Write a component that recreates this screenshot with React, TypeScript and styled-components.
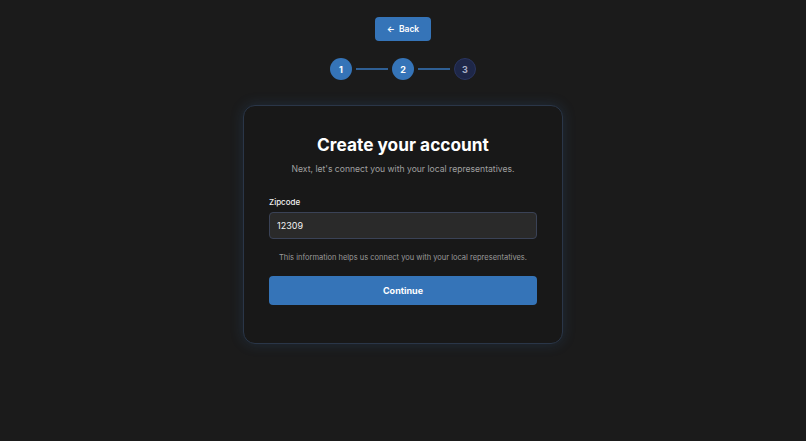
import React, { useState } from "react";
import styled, { createGlobalStyle } from "styled-components";

const Global = createGlobalStyle`
  html, body { margin: 0; padding: 0; background: #1b1b1b; }
  body { font-family: Inter, "Noto Sans", sans-serif; color: #fff; }
  * { box-sizing: border-box; }
`;

const Page = styled.div`
  min-height: 441px;
  display: flex;
  flex-direction: column;
  align-items: center;
  padding-top: 17px;
`;

const BackButton = styled.button`
  height: 24px;
  width: 56px;
  border: none;
  border-radius: 4px;
  background: #3574b8;
  color: #fff;
  font-family: Inter, sans-serif;
  font-size: 8.5px;
  font-weight: 600;
  display: flex;
  align-items: center;
  justify-content: center;
  gap: 4px;
  padding: 0;
  cursor: pointer;
`;

const Stepper = styled.div`
  display: flex;
  align-items: center;
  gap: 4px;
  margin-top: 17px;
`;

const StepCircle = styled.div<{ $active: boolean }>`
  width: 22px;
  height: 22px;
  border-radius: 50%;
  display: flex;
  align-items: center;
  justify-content: center;
  font-size: 9px;
  font-weight: 700;
  background: ${(p) => (p.$active ? "#3574b8" : "#1e2748")};
  color: ${(p) => (p.$active ? "#fff" : "#a9b0c6")};
  border: ${(p) => (p.$active ? "none" : "1px solid #2a3560")};
`;

const StepLine = styled.div`
  width: 32px;
  height: 2px;
  background: #2f5f94;
`;

const Card = styled.div`
  margin-top: 25px;
  width: 320px;
  height: 239px;
  background: #181818;
  border: 1px solid #2a3648;
  border-radius: 12px;
  box-shadow: 0 0 14px rgba(53, 116, 184, 0.2);
  padding: 27px 25px 0;
  display: flex;
  flex-direction: column;
`;

const Title = styled.h1`
  margin: 0;
  text-align: center;
  font-size: 17.3px;
  font-weight: 700;
  line-height: 24px;
  color: #fff;
`;

const Subtitle = styled.p`
  margin: 6px 0 0;
  text-align: center;
  font-size: 8.6px;
  line-height: 12px;
  color: #a0a0a0;
`;

const Label = styled.label`
  margin-top: 22px;
  font-size: 8px;
  font-weight: 500;
  color: #f0f0f0;
  line-height: 11px;
`;

const Input = styled.input`
  margin-top: 4px;
  height: 27px;
  width: 100%;
  background: #2a2a2a;
  border: 1px solid #3a4256;
  border-radius: 4px;
  color: #f2f2f2;
  font-family: Inter, sans-serif;
  font-size: 9px;
  padding: 0 7px;
  outline: none;
`;

const Helper = styled.p`
  margin: 14px 0 0;
  text-align: center;
  font-size: 7.5px;
  line-height: 10px;
  color: #9a9a9a;
`;

const ContinueButton = styled.button`
  margin-top: 13px;
  height: 29px;
  width: 100%;
  border: none;
  border-radius: 4px;
  background: #3574b8;
  color: #fff;
  font-family: Inter, sans-serif;
  font-size: 9px;
  font-weight: 700;
  cursor: pointer;
`;

export default function App() {
  const [zip, setZip] = useState("12309");
  return (
    <>
      <Global />
      <Page>
        <BackButton>
          <span>←</span>
          <span>Back</span>
        </BackButton>
        <Stepper>
          <StepCircle $active>1</StepCircle>
          <StepLine />
          <StepCircle $active>2</StepCircle>
          <StepLine />
          <StepCircle $active={false}>3</StepCircle>
        </Stepper>
        <Card>
          <Title>Create your account</Title>
          <Subtitle>Next, let's connect you with your local representatives.</Subtitle>
          <Label htmlFor="zip">Zipcode</Label>
          <Input id="zip" value={zip} onChange={(e) => setZip(e.target.value)} />
          <Helper>This information helps us connect you with your local representatives.</Helper>
          <ContinueButton>Continue</ContinueButton>
        </Card>
      </Page>
    </>
  );
}
